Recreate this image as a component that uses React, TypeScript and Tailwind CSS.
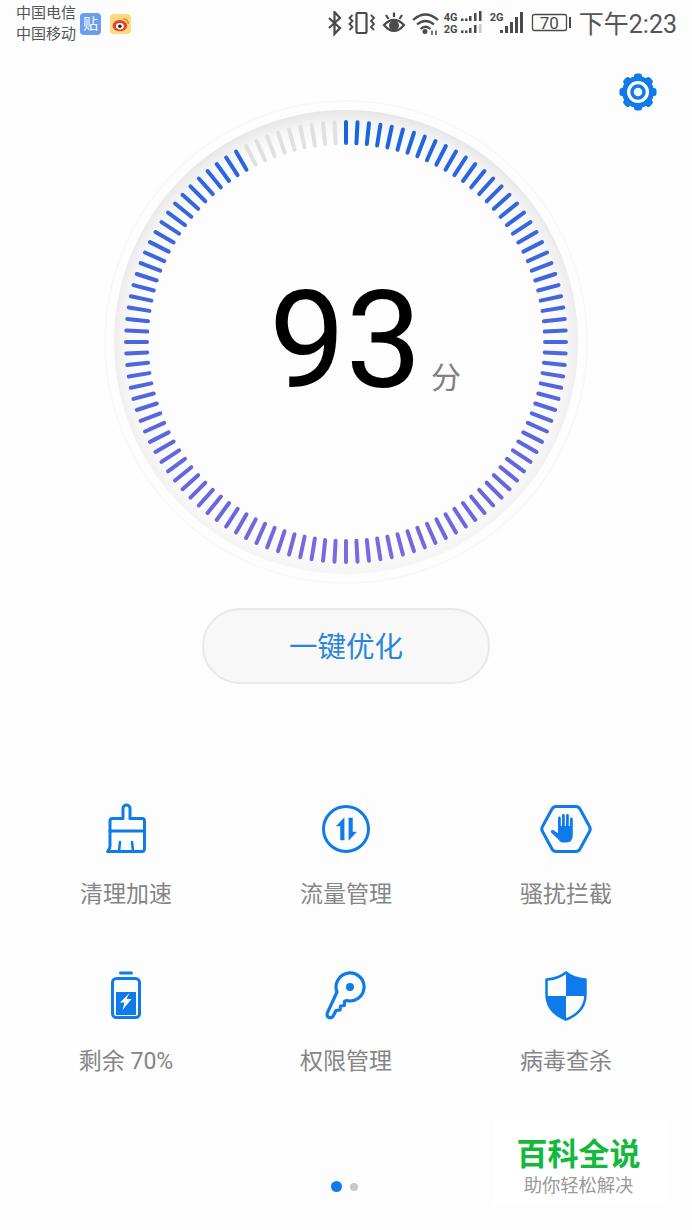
import type { ReactNode } from 'react'

const CJK = "font-['Roboto','Noto_Sans_CJK_SC',sans-serif]"

function mix(a: number[], b: number[], t: number) {
  const c = a.map((v, i) => Math.round(v + (b[i] - v) * t))
  return `rgb(${c[0]},${c[1]},${c[2]})`
}

// 120 ticks, 3deg apart, the last 9 stay grey
function Gauge() {
  const ticks = Array.from({ length: 120 }, (_, i) => {
    const deg = i * 3
    const rad = (deg * Math.PI) / 180
    const t = i <= 60 ? i / 60 : (120 - i) / 60
    const color = i > 110 ? '#e0e0e0' : mix([21, 101, 224], [128, 104, 222], t)
    return (
      <line
        key={i}
        x1={242 + 199 * Math.sin(rad)}
        y1={242 - 199 * Math.cos(rad)}
        x2={242 + 220 * Math.sin(rad)}
        y2={242 - 220 * Math.cos(rad)}
        stroke={color}
        strokeWidth={4}
        strokeLinecap="round"
      />
    )
  })
  return (
    <svg width="484" height="484" viewBox="0 0 484 484" className="block">
      <defs>
        <radialGradient id="ring" cx="242" cy="242" r="232" gradientUnits="userSpaceOnUse">
          <stop offset="0.87" stopColor="#fdfdfd" />
          <stop offset="0.94" stopColor="#f6f6f6" />
          <stop offset="1" stopColor="#e6e6e6" />
        </radialGradient>
        <linearGradient id="fade" x1="0" y1="0" x2="0" y2="1">
          <stop offset="0" stopColor="#fdfdfd" stopOpacity="0" />
          <stop offset="1" stopColor="#fdfdfd" stopOpacity="0.65" />
        </linearGradient>
      </defs>
      <circle cx="242" cy="242" r="241" fill="#fdfdfd" stroke="#f7f7f7" strokeWidth="1.5" />
      <circle cx="242" cy="242" r="232" fill="url(#ring)" />
      <circle cx="242" cy="242" r="233" fill="url(#fade)" />
      {ticks}
    </svg>
  )
}

function Gear() {
  const teeth = Array.from({ length: 8 }, (_, i) => (
    <rect key={i} x="16" y="1.5" width="8" height="7" rx="2.5" fill="#0f7bea" transform={`rotate(${i * 45} 20 20)`} />
  ))
  return (
    <svg width="40" height="40" viewBox="0 0 40 40">
      {teeth}
      <circle cx="20" cy="20" r="13.5" fill="#fdfdfd" stroke="#0f7bea" strokeWidth="5" />
      <circle cx="20" cy="20" r="6" fill="#fdfdfd" stroke="#0f7bea" strokeWidth="3.5" />
    </svg>
  )
}

function Icon({ children }: { children: ReactNode }) {
  return (
    <svg width="56" height="56" viewBox="0 0 56 56" fill="none" stroke="#0f7bea" strokeWidth="3" strokeLinecap="round" strokeLinejoin="round">
      {children}
    </svg>
  )
}

const tools: { label: string; icon: ReactNode }[] = [
  {
    label: '清理加速',
    icon: (
      <Icon>
        <path d="M25 17.5V7.5a3.5 3.5 0 0 1 7 0V17.5H44q2.5 0 2.5 2.5V30H12V20q0-2.5 2.5-2.5Z" />
        <path d="M12 30V45q0 3-2.5 5.5H44.5q2-.5 2-3V30" />
        <path d="M22 41 21 50M34 41 35 50" strokeWidth="2.5" />
      </Icon>
    ),
  },
  {
    label: '流量管理',
    icon: (
      <Icon>
        <circle cx="28" cy="28" r="22.5" />
        <path d="M26 17 18.5 25H22.5V39H26Z" fill="#0f7bea" strokeWidth="0.5" />
        <path d="M31 17H34.5V31H38.5L31 39Z" fill="#0f7bea" strokeWidth="0.5" />
      </Icon>
    ),
  },
  {
    label: '骚扰拦截',
    icon: (
      <Icon>
        <path d="M4.5 25.5 14 8Q15.5 5.5 18 5.5H38Q40.5 5.5 42 8L51.5 25.5Q53 28 51.5 30.5L42 48Q40.5 50.5 38 50.5H18Q15.5 50.5 14 48L4.5 30.5Q3 28 4.5 25.5Z" />
        <path
          d="M20 17a1.4 1.4 0 0 1 2.8 0V25H24V14.5a1.4 1.4 0 0 1 2.8 0V25H28V14.5a1.4 1.4 0 0 1 2.8 0V25H32V18a1.4 1.4 0 0 1 2.8 0V34q0 7.5-6.5 7.5H25q-3 0-5-3.5L13 31.5c-1-1.5 1-3.2 2.5-2.2l4.5 3Z"
          fill="#0f7bea"
          stroke="none"
        />
      </Icon>
    ),
  },
  {
    label: '剩余 70%',
    icon: (
      <Icon>
        <path d="M22.5 5H33.5" />
        <rect x="14.5" y="10.5" width="27" height="39" rx="4" />
        <rect x="18" y="24" width="20" height="23" fill="#0f7bea" stroke="none" />
        <path d="M31.5 25 22 34.5H26.5L24.5 42 33.5 31H28.5Z" fill="#fdfdfd" stroke="none" />
      </Icon>
    ),
  },
  {
    label: '权限管理',
    icon: (
      <Icon>
        <path d="M19 24A14 14 0 1 1 28.5 32.5L26.5 33.5V37.5L22.5 38 22 42 18 42.5 15 48.5Q12 51 9.5 48.5 8.5 46 10 43.5Z" strokeWidth="3.2" />
        <circle cx="32" cy="19" r="4" fill="#0f7bea" stroke="none" />
      </Icon>
    ),
  },
  {
    label: '病毒查杀',
    icon: (
      <Icon>
        <path d="M28 4 28 28H8.5V11.5Q20 11 28 4Z" fill="#fdfdfd" stroke="none" />
        <path d="M28 4.5Q36 11 47.5 11.5V28H28Z" fill="#0f7bea" stroke="none" />
        <path d="M8.5 28H28V51.5Q11 44 8.5 28Z" fill="#0f7bea" stroke="none" />
        <path d="M28 4.5Q36 11 47.5 11.5V26Q47.5 44 28 51.5 8.5 44 8.5 26V11.5Q20 11 28 4.5Z" strokeWidth="2.5" />
      </Icon>
    ),
  },
]

function StatusIcons() {
  return (
    <svg width="244" height="26" viewBox="0 0 244 26" fill="none" stroke="#4a4a4a" strokeWidth="2.2" className="block">
      {/* bluetooth */}
      <path d="M4 7 15 17 9.5 23V1L15 7 4 17" />
      {/* vibrate */}
      <rect x="31.5" y="2" width="10" height="20" rx="1" />
      <path d="M27.5 4 24.5 7 27.5 10 24.5 13 27.5 16 24.5 19M46 4 49 7 46 10 49 13 46 16 49 19" strokeWidth="1.8" />
      {/* eye */}
      <path d="M59 14Q69 4 79 14 69 26 59 14Z" />
      <circle cx="69" cy="14.5" r="5" fill="#4a4a4a" stroke="none" />
      <path d="M61 4 63.5 8M69 1.5V6M77 4 74.5 8" />
      {/* wifi */}
      <path d="M88 9Q100.5 -2 113 9M92 13.5Q100.5 6.5 109 13.5M95.5 18Q100.5 13.5 105.5 18" />
      <circle cx="100" cy="20.5" r="2.5" fill="#4a4a4a" stroke="none" />
      <path d="M107 19.5V24M111 24V19.5" strokeWidth="1.5" />
      {/* dual sim bars */}
      <g fill="#4a4a4a" stroke="none">
        <rect x="136" y="7.5" width="2.5" height="2.5" />
        <rect x="140" y="7.5" width="2.5" height="2.5" />
        <rect x="144" y="5" width="2.5" height="5" />
        <rect x="149" y="2" width="2.5" height="8" />
        <rect x="154" y="0" width="2.5" height="10" />
        <rect x="136" y="19.5" width="2.5" height="2.5" />
        <rect x="140" y="19.5" width="2.5" height="2.5" />
        <rect x="144" y="17" width="2.5" height="5" />
        <rect x="149" y="14" width="2.5" height="8" />
        <rect x="154" y="13" width="2.5" height="9" fill="#c8c8c8" />
        <rect x="175" y="19" width="3" height="3" />
        <rect x="180" y="15" width="3" height="7" />
        <rect x="185" y="11" width="3" height="11" />
        <rect x="190" y="6" width="3" height="16" />
        <rect x="195" y="1" width="3" height="21" />
      </g>
      {/* battery */}
      <rect x="207.5" y="3.5" width="34" height="16" rx="2" strokeWidth="1.3" />
    </svg>
  )
}

export default function App() {
  return (
    <div className={`relative flex h-[1230px] w-[692px] flex-col overflow-hidden bg-[#fdfdfd] ${CJK}`}>
      {/* status bar */}
      <div className="flex h-12 items-center justify-between pl-4 pr-[15px]">
        <div className="flex items-center gap-[4px]">
          <div className="text-[15px] leading-[21px] text-[#555]">
            <div>中国电信</div>
            <div>中国移动</div>
          </div>
          <div className="flex h-[22px] w-[21px] items-center justify-center rounded-[4px] bg-[#6a9ef0] text-[15px] leading-none text-white">贴</div>
          <div className="ml-[5px] flex h-[20px] w-[21px] items-center justify-center rounded-[4px] bg-[#fbd97e]">
            <svg width="18" height="16" viewBox="0 0 16 14">
              <ellipse cx="7" cy="8.5" rx="6.5" ry="5" fill="#e4442e" />
              <ellipse cx="7" cy="9" rx="3.5" ry="2.8" fill="#fff" />
              <circle cx="7" cy="9" r="1.6" fill="#222" />
              <path d="M10 2.5a4 4 0 0 1 4.5 4.5" fill="none" stroke="#f08a2e" strokeWidth="1.4" />
            </svg>
          </div>
        </div>
        <div className="relative flex items-center">
          <StatusIcons />
          <span className="absolute left-[119px] top-[1px] text-[11px] font-bold leading-[12px] text-[#4a4a4a]">4G<br />2G</span>
          <span className="absolute left-[165px] top-[1px] text-[11px] font-bold leading-[12px] text-[#4a4a4a]">2G</span>
          <span className="absolute left-[208px] top-0 w-[33px] text-center text-[17px] leading-[24px] text-[#4a4a4a]">70</span>
          <span className="absolute left-[244px] top-[6px] h-[11px] w-[2.5px] bg-[#4a4a4a]" />
          <span className="ml-[10px] text-[25px] leading-none text-[#555]">下午2:23</span>
        </div>
      </div>

      {/* settings */}
      <div className="flex h-[52px] justify-end pr-[34px] pt-6">
        <Gear />
      </div>

      {/* score dial */}
      <div className="relative mx-auto h-[484px] w-[484px]">
        <Gauge />
        <div className="absolute left-[165px] top-[156px] text-[136px] font-normal leading-[170px] text-black">93</div>
        <div className="absolute left-[327px] top-[258px] text-[30px] leading-[40px] text-[#808080]">分</div>
      </div>

      <button
        type="button"
        className="mx-auto mt-6 h-[76px] w-[288px] rounded-full border-2 border-[#e8e8e8] bg-[#f8f8f8] pt-1 text-[28.5px] text-[#2a86d8]"
      >
        一键优化
      </button>

      {/* tools */}
      <div className="mt-[117px] grid grid-cols-3 gap-y-[57px] px-4">
        {tools.map((tool) => (
          <div key={tool.label} className="flex flex-col items-center">
            {tool.icon}
            <div className="mt-[22px] text-[23px] leading-8 text-[#858585]">{tool.label}</div>
          </div>
        ))}
      </div>

      {/* pager */}
      <div className="mt-[103px] flex items-center justify-center gap-2 pr-[3px]">
        <span className="h-[11px] w-[11px] rounded-full bg-[#0f7bea]" />
        <span className="h-2 w-2 rounded-full bg-[#c8c8c8]" />
      </div>

      {/* watermark */}
      <div className="absolute left-[493px] top-[1120px] flex h-[85px] w-[175px] flex-col items-center bg-white pr-1 pt-4">
        <div className="text-[31px] font-bold leading-[38px] text-[#12b93a]">百科全说</div>
        <div className="text-[18.3px] leading-[24px] text-[#999]">助你轻松解决</div>
      </div>
    </div>
  )
}
